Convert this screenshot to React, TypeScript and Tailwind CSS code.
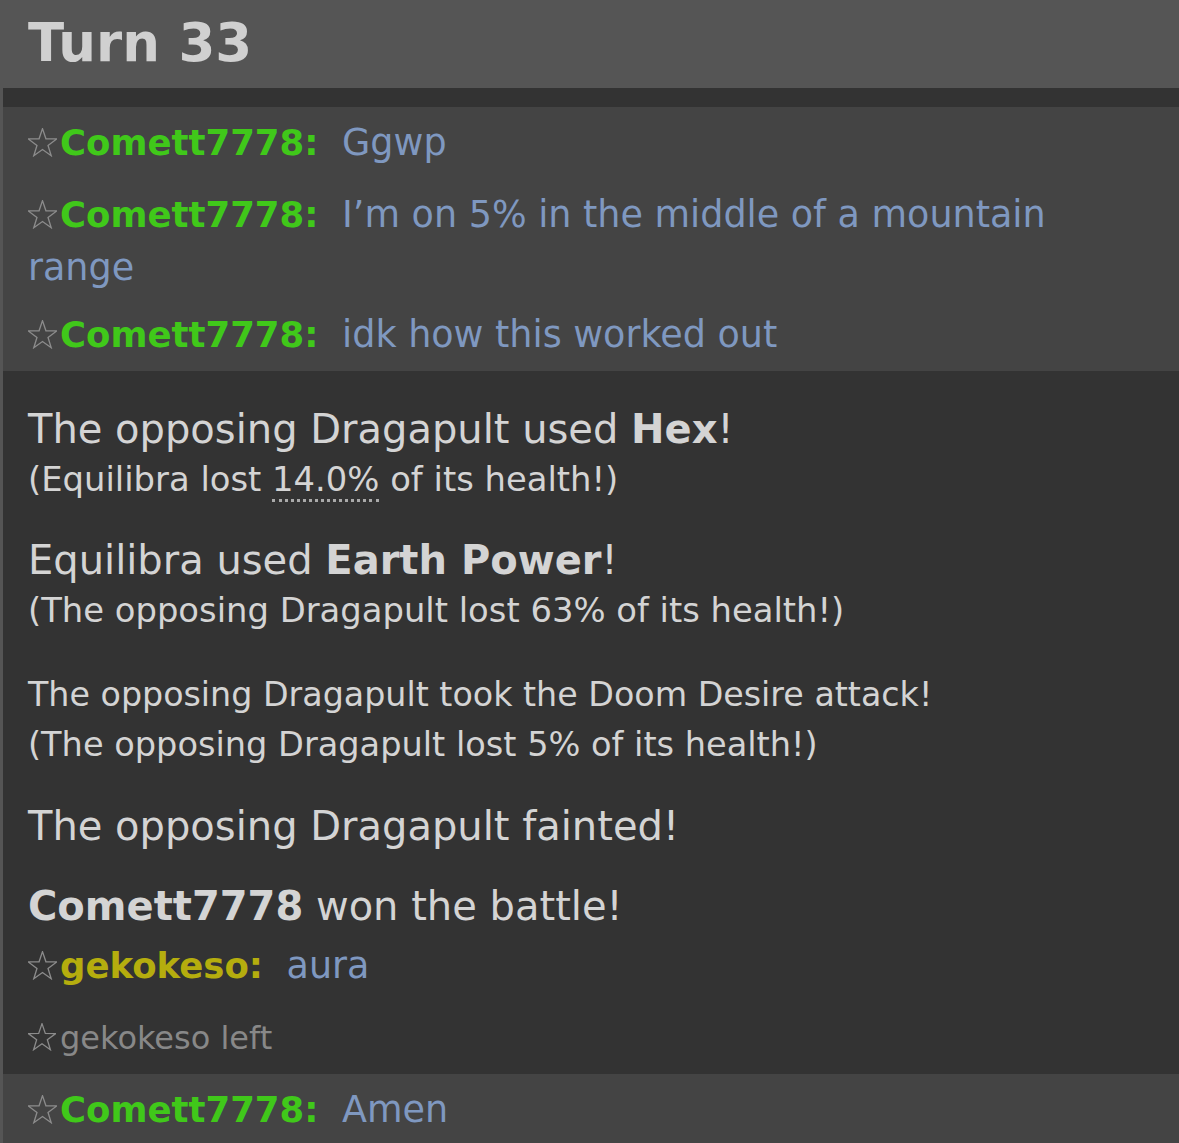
import React from 'react';

const Star: React.FC<{ size?: number }> = ({ size = 29 }) => (
  <span className="inline-block w-[32px]">
    <svg
      width={size}
      height={size}
      viewBox="1 1 22 22"
      className="inline-block align-[-2px]"
      fill="none"
      stroke="#8c8c8c"
      strokeWidth="1"
      strokeLinejoin="miter"
    >
      <polygon points="12,1.5 14.6,9.2 22.8,9.3 16.2,14.2 18.6,22 12,17.3 5.4,22 7.8,14.2 1.2,9.3 9.4,9.2" />
    </svg>
  </span>
);

interface ChatProps {
  name: string;
  color: string;
  text: string;
  className?: string;
}

const Chat: React.FC<ChatProps> = ({ name, color, text, className }) => (
  <div className={`text-[36px] leading-[53px] ${className ?? ''}`}>
    <Star />
    <strong className={`text-[35.5px] font-bold ${color}`}>{name}:</strong>
    <em className="not-italic text-[36.5px] text-[#7f98c0] pl-[12px]"> {text}</em>
  </div>
);

const App: React.FC = () => {
  return (
    <div
      className="min-h-screen bg-[#333] border-l-[3px] border-[#555] text-[#d4d4d4]"
      style={{ fontFamily: '"DejaVu Sans", Verdana, sans-serif' }}
    >
      <h2 className="bg-[#555] h-[88px] leading-[86px] pl-[25px] text-[53px] font-bold text-[#d0d0d0]">
        Turn 33
      </h2>

      <div className="mt-[19px] bg-[#444] pl-[25px] pr-[30px] pt-[9px] pb-[10px]">
        <Chat name="Comett7778" color="text-[#40c81a]" text="Ggwp" />
        <Chat
          name="Comett7778"
          color="text-[#40c81a]"
          text="I’m on 5% in the middle of a mountain range"
          className="mt-[19px]"
        />
        <Chat
          name="Comett7778"
          color="text-[#40c81a]"
          text="idk how this worked out"
          className="mt-[14px]"
        />
      </div>

      <div className="pl-[25px] pr-[30px] pt-[32px] pb-[13px]">
        <div>
          <div className="text-[40px] leading-[52px]">
            The opposing Dragapult used <strong className="font-bold">Hex</strong>!
          </div>
          <div className="text-[33.8px] leading-[50px]">
            (Equilibra lost{' '}
            <abbr className="no-underline border-b-[3px] border-dotted border-[#aaa]">14.0%</abbr>{' '}
            of its health!)
          </div>
        </div>

        <div className="mt-[29px]">
          <div className="text-[40px] leading-[52px]">
            Equilibra used <strong className="font-bold">Earth Power</strong>!
          </div>
          <div className="text-[33.8px] leading-[50px]">
            (The opposing Dragapult lost 63% of its health!)
          </div>
        </div>

        <div className="mt-[34px]">
          <div className="text-[33.3px] leading-[50px]">
            The opposing Dragapult took the Doom Desire attack!
          </div>
          <div className="text-[33.6px] leading-[50px]">
            (The opposing Dragapult lost 5% of its health!)
          </div>
        </div>

        <div className="mt-[30px] text-[40px] leading-[52px]">The opposing Dragapult fainted!</div>

        <div className="mt-[28px] text-[40px] leading-[52px]">
          <strong className="font-bold">Comett7778</strong> won the battle!
        </div>

        <Chat
          name="gekokeso"
          color="text-[#b5ad0e]"
          text="aura"
          className="mt-[7px]"
        />

        <div className="mt-[23px] text-[32px] leading-[46px] text-[#888]">
          <Star size={28} />
          gekokeso left
        </div>
      </div>

      <div className="bg-[#444] pl-[25px] pr-[30px] pt-[9px] pb-[10px]">
        <Chat name="Comett7778" color="text-[#40c81a]" text="Amen" />
      </div>
    </div>
  );
};

export default App;
